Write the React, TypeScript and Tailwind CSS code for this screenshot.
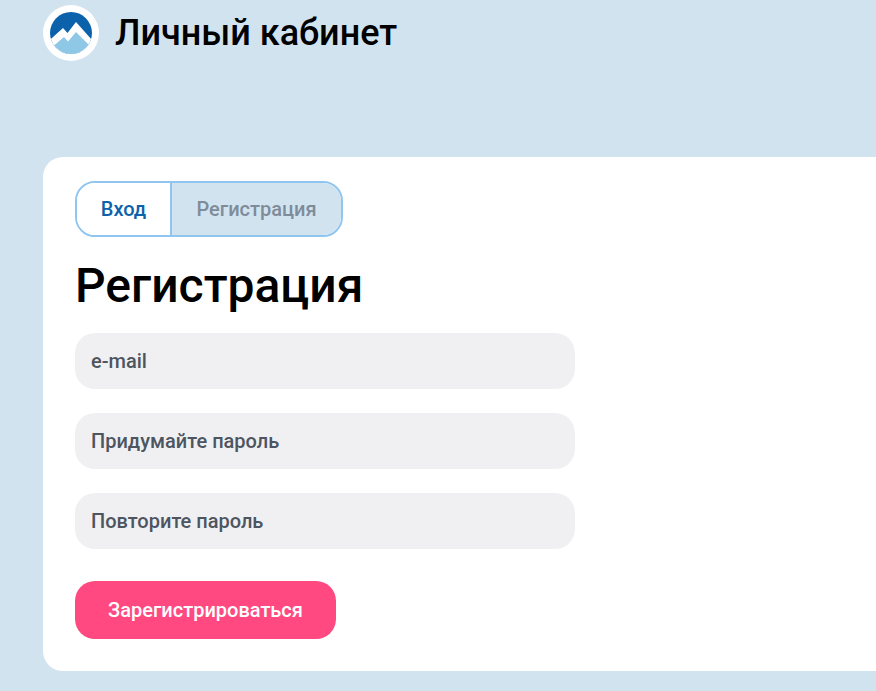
export default function App() {
  const inputs = ["e-mail", "Придумайте пароль", "Повторите пароль"];
  return (
    <div className="h-[691px] w-[876px] overflow-hidden bg-[#d2e3f0] pl-[43px] pt-[5px] font-['Roboto',sans-serif]">
      <header className="flex h-[56px] items-center gap-[16px]">
        <svg width="56" height="56" viewBox="0 0 56 56" className="shrink-0">
          <circle cx="28" cy="28" r="28" fill="#ffffff" />
          <defs>
            <clipPath id="c"><circle cx="28" cy="28" r="21" /></clipPath>
          </defs>
          <g clipPath="url(#c)">
            <rect x="0" y="0" width="56" height="56" fill="#0b62ab" />
            <path d="M0 41 L20 23 L24.5 28 L33 17 L56 43 V56 H0 Z" fill="#ffffff" />
            <path d="M8 43 L21 32 L25 36.5 L33 27 L48 42 V56 H8 Z" fill="#8ec8e6" />
          </g>
        </svg>
        <h1 className="text-[36px] font-medium leading-none text-black">Личный кабинет</h1>
      </header>
      <main className="mt-[96px] h-[514px] rounded-l-[20px] bg-white pl-[32px] pt-[24px]">
        <div className="flex h-[56px] w-[268px] overflow-hidden rounded-[20px] border-2 border-[#90c5f0] text-[20px] font-medium">
          <div className="flex w-[95px] items-center justify-center border-r-2 border-[#90c5f0] bg-white text-[#0b62ab]">Вход</div>
          <div className="flex flex-1 items-center justify-center bg-[#d2e3f0] text-[#7e8c99]">Регистрация</div>
        </div>
        <h2 className="mt-[21px] text-[48px] font-medium leading-[56px] text-black">Регистрация</h2>
        <div className="mt-[19px] flex w-[500px] flex-col gap-[24px]">
          {inputs.map((t) => (
            <div key={t} className="flex h-[56px] items-center rounded-[20px] bg-[#f0f0f3] px-[16px] text-[20px] font-medium text-[#4d5560]">{t}</div>
          ))}
        </div>
        <button className="mt-[32px] flex h-[58px] w-[261px] items-center justify-center rounded-[20px] bg-[#ff4980] text-[20px] font-medium text-white">Зарегистрироваться</button>
      </main>
    </div>
  );
}
